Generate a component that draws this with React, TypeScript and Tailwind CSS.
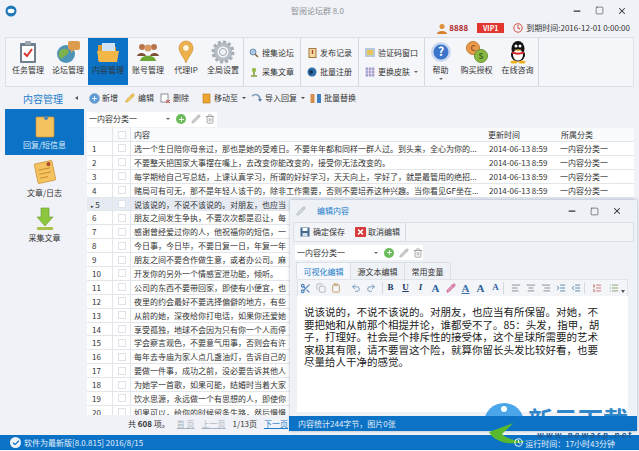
import { AlignCenter, AlignLeft, AlignRight, Check, Clipboard, Clock, Copy, IndentDecrease, IndentIncrease, List, ListOrdered, Minus, Pencil, Plus, Redo2, Scissors, Square, Trash2, Undo2, X } from 'lucide-react'
import type { ReactNode } from 'react'

const rows = [
  '选一个生日陪你母亲过，那也是她的受难日。不要年年都和同样一群人过。到头来，全心为你的...',
  '不要整天把国家大事摆在嘴上，去改变你能改变的，接受你无法改变的。',
  '每学期给自己写总结，上课认真学习，所谓的好好学习，天天向上，学好了，就是最管用的绝招...',
  '赌局可有可无，那不是年轻人该干的，除非工作需要，否则不要培养这种兴趣。当你看见GF坐在...',
  '说该说的，不说不该说的。对朋友，也应当',
  '朋友之间发生争执，不要次次都是忍让，每',
  '感谢曾经爱过你的人，他祝福你的短信，一',
  '今日事，今日毕，不要日复一日，年复一年',
  '朋友之间不要合作做生意，或者办公司。麻',
  '开发你的另外一个情感宣泄功能，倾听。',
  '公司的东西不要带回家，即使有小便宜，也',
  '夜里的约会最好不要选择偏僻的地方，有些',
  '从前的她，深夜给你打电话，如果你还爱她',
  '享受孤独，地球不会因为只有你一个人而停',
  '学会察言观色，不要意气用事，否则会有许',
  '每年去寺庙为家人点几盏油灯，告诉自己的',
  '要做一件事，成功之前，没必要告诉其他人',
  '为她学一首歌，如果可能，结婚时当着大家',
  '饮水思源，永远做一个有思想的人，即使你',
  '如果可以，给你的时候留条生路，然后慢慢',
]

function RibbonButton({ label, active, children, w = 'w-10' }: { label: string; active?: boolean; w?: string; children: ReactNode }) {
  return (
    <div className={`${w} h-[47px] flex flex-col items-center pt-[2px] shrink-0 ${active ? 'bg-[#0b72c6]' : ''}`}>
      <div className="h-[24px] flex items-center justify-center">{children}</div>
      <span className="text-[8px] leading-[12px] text-[#333]">{label}</span>
    </div>
  )
}

function SmallButton({ label, children, caret }: { label: string; caret?: boolean; children: ReactNode }) {
  return (
    <div className="flex items-center gap-[3px] h-[12px] whitespace-nowrap">
      <div className="w-[10px] h-[10px] flex items-center justify-center">{children}</div>
      <span className="text-[8px] leading-[12px] text-[#333]">{label}</span>
      {caret && <span className="ml-[1px] border-x-[2px] border-t-[2px] border-x-transparent border-t-[#666]" />}
    </div>
  )
}

function ToolItem({ label, caret, className = '', children }: { label: string; caret?: boolean; className?: string; children: ReactNode }) {
  return (
    <div className={`flex items-center gap-[2px] whitespace-nowrap ${className}`}>
      <div className="w-[12px] h-[12px] flex items-center justify-center">{children}</div>
      <span className="text-[8px] text-[#333]">{label}</span>
      {caret && <span className="ml-[2px] border-x-[2px] border-t-[2px] border-x-transparent border-t-[#444]" />}
    </div>
  )
}

function CategorySelect({ width }: { width: string }) {
  return (
    <div className="flex items-center h-[15px] bg-white">
      <div className={`${width} flex items-center justify-between pl-[2px] pr-[2px] text-[8px] leading-[12px] text-[#333]`}>
        <span>一内容分类一</span>
        <span className="border-x-[2px] border-t-[2px] border-x-transparent border-t-[#666]" />
      </div>
      <div className="ml-[4px] w-[10px] h-[10px] rounded-full bg-[#6cbb5a] flex items-center justify-center">
        <Plus size={7} strokeWidth={3} color="#fff" />
      </div>
      <Pencil size={10} color="#bbb" className="ml-[5px]" fill="#ccc" />
      <Trash2 size={10} color="#999" className="ml-[4px]" />
    </div>
  )
}

function Cell({ children }: { children: ReactNode }) {
  return <div className="w-[15px] h-[12px] shrink-0 flex items-center justify-center">{children}</div>
}

function ClipboardIcon() {
  return (
    <svg width="20" height="24" viewBox="0 0 20 24">
      <rect x="2" y="3" width="16" height="20" rx="1" fill="#6f7f8c" />
      <rect x="4" y="6" width="12" height="15" fill="#fff" />
      <rect x="7" y="1" width="6" height="4" rx="1" fill="#9aa6b0" />
      <path d="M6 13l3 3 5-7" stroke="#d8342c" strokeWidth="2" fill="none" />
    </svg>
  )
}

function GlobeIcon() {
  return (
    <svg width="26" height="24" viewBox="0 0 26 24">
      <circle cx="11" cy="14" r="9" fill="#4d93b5" />
      <path d="M4 12c3-4 7-4 9-2s-1 5-3 6-4 3-4 3c-2-2-3-4-2-7z" fill="#7eb04c" />
      <rect x="13" y="1" width="12" height="9" rx="2" fill="#dc9c4e" />
      <path d="M16 10v3l3-3z" fill="#dc9c4e" />
    </svg>
  )
}

function FolderIcon() {
  return (
    <svg width="24" height="22" viewBox="0 0 24 22">
      <path d="M2 4h7l2 2h9v14H2z" fill="#d99c33" />
      <rect x="6" y="2" width="13" height="12" fill="#cfe1f2" />
      <path d="M1 10h22l-2 11H3z" fill="#f3b748" />
    </svg>
  )
}

function PeopleIcon() {
  return (
    <svg width="24" height="20" viewBox="0 0 24 20">
      <circle cx="6" cy="5" r="3" fill="#b7734a" />
      <circle cx="18" cy="5" r="3" fill="#b7734a" />
      <circle cx="12" cy="6" r="3.5" fill="#d89a62" />
      <path d="M1 14c1-4 8-4 9 0z" fill="#7c4f33" />
      <path d="M14 14c1-4 8-4 9 0z" fill="#7c4f33" />
      <path d="M4 19c1-7 15-7 16 0z" fill="#6da834" />
    </svg>
  )
}

function PinIcon() {
  return (
    <svg width="16" height="24" viewBox="0 0 16 24">
      <path d="M8 1a7 7 0 0 1 7 7c0 5-5 9-7 15C6 17 1 13 1 8a7 7 0 0 1 7-7z" fill="#eeb04a" stroke="#c98a2c" strokeWidth="0.6" />
      <circle cx="8" cy="8" r="3.4" fill="#fff6dc" stroke="#c98a2c" strokeWidth="0.6" />
    </svg>
  )
}

function GearIcon() {
  return (
    <svg width="24" height="24" viewBox="0 0 24 24">
      <circle cx="12" cy="12" r="7.5" fill="none" stroke="#b7bdc4" strokeWidth="4" />
      <circle cx="12" cy="12" r="10" fill="none" stroke="#a7adb5" strokeWidth="3" strokeDasharray="3 2.2" />
      <circle cx="12" cy="12" r="3.6" fill="#eef0f4" stroke="#8f98a2" strokeWidth="0.8" />
    </svg>
  )
}

function HelpIcon() {
  return (
    <svg width="22" height="22" viewBox="0 0 22 22">
      <circle cx="11" cy="11" r="10" fill="#c9d8ee" />
      <circle cx="11" cy="11" r="7.5" fill="#3c74cc" />
      <text x="11" y="15" textAnchor="middle" fontSize="12" fontWeight="700" fill="#fff">?</text>
    </svg>
  )
}

function CoinsIcon() {
  return (
    <svg width="24" height="24" viewBox="0 0 24 24">
      <circle cx="8" cy="8" r="6.5" fill="#e59a4c" stroke="#c77a2c" />
      <circle cx="16" cy="16" r="6.5" fill="#8bb845" stroke="#66922a" />
      <text x="8" y="11" textAnchor="middle" fontSize="8" fontWeight="700" fill="#a9561a">C</text>
      <text x="16" y="19" textAnchor="middle" fontSize="8" fontWeight="700" fill="#3f6b17">S</text>
    </svg>
  )
}

function QQIcon() {
  return (
    <svg width="20" height="24" viewBox="0 0 20 24">
      <ellipse cx="10" cy="9" rx="6.5" ry="8" fill="#111" />
      <ellipse cx="10" cy="15" rx="7" ry="6.5" fill="#111" />
      <ellipse cx="10" cy="15" rx="5" ry="5.5" fill="#fff" />
      <circle cx="8" cy="6" r="1.5" fill="#fff" />
      <circle cx="12" cy="6" r="1.5" fill="#fff" />
      <path d="M6 9c2 1 6 1 8 0l-4 2.5z" fill="#efb01e" />
      <path d="M4 11.5c4 1.5 8 1.5 12 0v2c-4 1.5-8 1.5-12 0z" fill="#d8262a" />
      <ellipse cx="6" cy="22" rx="3.5" ry="1.5" fill="#efb01e" />
      <ellipse cx="14" cy="22" rx="3.5" ry="1.5" fill="#efb01e" />
    </svg>
  )
}

function NoteIcon({ tilt }: { tilt?: boolean }) {
  return (
    <svg width="26" height="26" viewBox="0 0 26 26" className={tilt ? '-rotate-12' : ''}>
      <rect x="4" y="3" width="18" height="20" rx="1" fill="#f4c25f" stroke="#c88f2e" strokeWidth="0.7" />
      {tilt && <path d="M7 10h12M7 14h12M7 18h8" stroke="#c88f2e" strokeWidth="1" />}
      <circle cx={tilt ? 18 : 14} cy={tilt ? 6 : 4} r="2" fill={tilt ? '#a8482e' : '#4b86b8'} />
    </svg>
  )
}

function DownloadIcon() {
  return (
    <svg width="18" height="24" viewBox="0 0 18 24">
      <path d="M5 1h8v9h4l-8 9-8-9h4z" fill="#8cc63f" stroke="#64982a" strokeWidth="0.6" />
      <rect x="1" y="20" width="16" height="3" rx="1" fill="#a8c24a" />
    </svg>
  )
}

export default function App() {
  return (
    <div className="relative w-[639px] h-[451px] overflow-hidden flex flex-col bg-[#f0f2f7] font-['Noto_Sans_CJK_SC','Liberation_Sans',sans-serif] text-[#333]">
      {/* title + account */}
      <div className="h-[37px] shrink-0 relative">
        <div className="flex items-center justify-between h-[21px] pl-[5px] pr-[12px]">
          <svg width="12" height="12" viewBox="0 0 12 12">
            <circle cx="6" cy="6" r="5.5" fill="#1f78b8" />
            <ellipse cx="6" cy="6" rx="3.4" ry="2.2" fill="#fff" />
          </svg>
          <span className="text-[8px] text-[#8a8f96] ml-[46px]">智阅论坛群 8.0</span>
          <div className="flex items-center gap-[13px] text-[#333]">
            <Minus size={10} strokeWidth={3} />
            <Square size={9} strokeWidth={1.5} />
            <X size={10} strokeWidth={2.5} />
          </div>
        </div>
        <div className="flex items-center justify-end pr-[9px] h-[14px] text-[8px]">
          <svg width="10" height="11" viewBox="0 0 10 11">
            <circle cx="5" cy="3.5" r="2.5" fill="#e0913a" />
            <path d="M0 11c0-4 10-4 10 0z" fill="#d67e2a" />
          </svg>
          <span className="ml-[2px] font-bold text-[#b01f2a]">8888</span>
          <span className="ml-[9px] w-[27px] h-[10px] bg-[#e2352d] text-white text-[7px] leading-[10px] text-center font-bold">VIP1</span>
          <Clock size={10} color="#d0503f" strokeWidth={2.5} className="ml-[9px]" />
          <span className="ml-[3px] text-[#333]">到期时间:2016-12-01 0:00:00</span>
        </div>
      </div>

      {/* ribbon */}
      <div className="mx-[5px] h-[50px] shrink-0 flex bg-[#f5f6f9] border border-[#dde0e6]">
        <div className="flex pl-[2px] w-[238px] border-r border-[#d4d8df]">
          <RibbonButton label="任务管理"><ClipboardIcon /></RibbonButton>
          <RibbonButton label="论坛管理"><GlobeIcon /></RibbonButton>
          <RibbonButton label="内容管理" active><FolderIcon /></RibbonButton>
          <RibbonButton label="账号管理"><PeopleIcon /></RibbonButton>
          <RibbonButton label="代理IP" w="w-9"><PinIcon /></RibbonButton>
          <RibbonButton label="全局设置" w="w-[38px]"><GearIcon /></RibbonButton>
        </div>
        <div className="w-[57px] border-r border-[#d4d8df] flex flex-col justify-center gap-[7px] pl-[5px]">
          <SmallButton label="搜集论坛">
            <svg width="10" height="10" viewBox="0 0 10 10"><circle cx="4" cy="4" r="3" fill="#a9c8e4" stroke="#6f8fae" /><path d="M6 6l3 3" stroke="#8a6b3f" strokeWidth="1.6" /></svg>
          </SmallButton>
          <SmallButton label="采集文章">
            <svg width="10" height="10" viewBox="0 0 10 10"><circle cx="5" cy="3" r="2.2" fill="#9dbb4b" /><path d="M5 5v3M2 9h6" stroke="#7f9c34" strokeWidth="1.5" /></svg>
          </SmallButton>
        </div>
        <div className="w-[58px] border-r border-[#d4d8df] flex flex-col justify-center gap-[7px] pl-[6px]">
          <SmallButton label="发布记录">
            <svg width="9" height="10" viewBox="0 0 9 10"><rect x="1" y="0.5" width="7" height="9" fill="#f2d9a2" stroke="#a5783a" /><path d="M4.5 2v4" stroke="#b0452f" strokeWidth="1.4" /></svg>
          </SmallButton>
          <SmallButton label="批量注册">
            <svg width="10" height="10" viewBox="0 0 10 10"><circle cx="5" cy="5" r="4.5" fill="#2d6ea8" /><path d="M2 4c2-2 4-1 4 1s-3 2-3 3z" fill="#16395a" /></svg>
          </SmallButton>
        </div>
        <div className="w-[66px] border-r border-[#d4d8df] flex flex-col justify-center gap-[7px] pl-[6px]">
          <SmallButton label="验证码窗口">
            <svg width="10" height="9" viewBox="0 0 10 9"><rect width="10" height="9" fill="#b8c9d8" /><rect x="2" y="2" width="6" height="5" fill="#e8c35a" /></svg>
          </SmallButton>
          <SmallButton label="更换皮肤" caret>
            <svg width="10" height="10" viewBox="0 0 10 10">
              <path d="M0 2h10M0 5h10M0 8h10" stroke="#d88fb5" />
              <path d="M2 0v10M5 0v10M8 0v10" stroke="#6e8fd0" />
            </svg>
          </SmallButton>
        </div>
        <div className="w-[114px] border-r border-[#d4d8df] flex">
          <div className="w-[31px] flex flex-col items-center pt-[2px]">
            <div className="h-[24px] flex items-center"><HelpIcon /></div>
            <span className="text-[8px] leading-[12px]">帮助</span>
            <span className="border-x-[2px] border-t-[2px] border-x-transparent border-t-[#666] mt-[2px]" />
          </div>
          <RibbonButton label="购买授权" w="w-[41px]"><CoinsIcon /></RibbonButton>
          <RibbonButton label="在线咨询" w="w-[41px]"><QQIcon /></RibbonButton>
        </div>
      </div>

      {/* sub toolbar */}
      <div className="h-[23px] pb-[1px] shrink-0 flex items-center ml-[23px]">
        <span className="text-[10px] text-[#1c7cc9] w-[52px]">内容管理</span>
        <span className="border-y-[2.5px] border-r-[3px] border-y-transparent border-r-[#555]" />
        <ToolItem label="新增" className="ml-[10px]">
          <div className="w-[11px] h-[11px] rounded-full bg-[#5a9bd8] border border-[#9fb6cc] flex items-center justify-center"><Plus size={7} color="#fff" strokeWidth={3} /></div>
        </ToolItem>
        <ToolItem label="编辑" className="ml-[6px]"><Pencil size={10} color="#d9a93a" fill="#f2cc6b" /></ToolItem>
        <ToolItem label="删除" className="ml-[5px]">
          <svg width="11" height="11" viewBox="0 0 11 11"><rect x="1" y="1" width="7" height="8" fill="#fff" stroke="#8a8f96" /><path d="M6 7l4 3M10 7l-4 3" stroke="#c7443a" /></svg>
        </ToolItem>
        <ToolItem label="移动至" caret className="ml-[11px]">
          <svg width="9" height="11" viewBox="0 0 9 11"><rect x="1" y="1" width="7" height="9" fill="#eda52f" stroke="#b9761a" strokeWidth="0.6" /></svg>
        </ToolItem>
        <ToolItem label="导入回复" caret className="ml-[5px]">
          <svg width="12" height="11" viewBox="0 0 12 11"><path d="M1 3c4-3 8-1 8 4" stroke="#7d9cb8" strokeWidth="1.6" fill="none" /><path d="M7 6l2 3 2-3z" fill="#5a7f9f" /></svg>
        </ToolItem>
        <ToolItem label="批量替换" className="ml-[5px]">
          <svg width="12" height="11" viewBox="0 0 12 11"><rect x="0.5" y="1" width="4" height="9" fill="#d58e4a" /><rect x="7" y="1" width="4" height="9" fill="#3f7fc0" /></svg>
        </ToolItem>
      </div>

      {/* body */}
      <div className="flex flex-1 min-h-0 pl-[5px] pr-[5px]">
        <aside className="w-[79px] shrink-0 flex flex-col -mt-[1px]">
          <div className="h-[46px] bg-[#0b72c6] flex flex-col items-center pt-[5px]">
            <NoteIcon />
            <span className="text-[8px] leading-[11px] text-[#dfeefa] -mt-[1px]">回复/短信息</span>
          </div>
          <div className="h-[44px] flex flex-col items-center pt-[4px]">
            <NoteIcon tilt />
            <span className="text-[8px] leading-[11px] mt-[2px]">文章/日志</span>
          </div>
          <div className="h-[44px] flex flex-col items-center pt-[8px]">
            <DownloadIcon />
            <span className="text-[8px] leading-[11px] mt-[1px]">采集文章</span>
          </div>
        </aside>

        <main className="flex-1 min-w-0 ml-[3px] flex flex-col">
          <div className="h-[18px] shrink-0 flex items-center">
            <div className="bg-white pr-[2px]"><CategorySelect width="w-[85px]" /></div>
          </div>
          <div className="h-[287px] shrink-0 overflow-hidden bg-white">
            <div className="flex h-[14px] bg-[#fafbfc] border-b border-[#e2e5ea] text-[8px] leading-[13px]">
              <div className="w-[25px] shrink-0" />
              <div className="w-[19px] shrink-0 border-x border-[#e2e5ea] flex items-center justify-center">
                <span className="w-[8px] h-[8px] border border-[#dfe2e7] bg-white" />
              </div>
              <div className="w-[355px] shrink-0 pl-[3px]">内容</div>
              <div className="w-[73px] shrink-0 pl-[2px]">更新时间</div>
              <div className="flex-1 pl-[2px]">所属分类</div>
            </div>
            {rows.map((text, i) => (
              <div key={i} className={`flex h-[13.9px] border-b border-[#e2e5ea] text-[8px] leading-[13px] ${i === 4 ? 'bg-[#e6ebf3]' : ''}`}>
                <div className={`w-[25px] shrink-0 ${i === 4 ? 'pl-[4px]' : 'pl-[5px]'}`}>
                  {i === 4 && <span className="text-[5px] align-middle">▸ </span>}
                  {i + 1}
                </div>
                <div className="w-[19px] shrink-0 border-x border-[#e2e5ea] flex items-center justify-center">
                  <span className="w-[8px] h-[8px] border border-[#dfe2e7] bg-white" />
                </div>
                <div className="w-[355px] shrink-0 pl-[3px] whitespace-nowrap">{text}</div>
                {/* the date and category columns of later rows sit behind the editor window */}
                {i < 4 && (
                  <>
                    <div className="w-[73px] shrink-0 pl-[3px] whitespace-nowrap">2014-06-13 8:59</div>
                    <div className="flex-1 pl-[1px] whitespace-nowrap">一内容分类一</div>
                  </>
                )}
              </div>
            ))}
          </div>
          <div className="h-[18px] shrink-0 flex items-center text-[8px] pl-[41px] gap-[7px] whitespace-nowrap">
            <span>共 <b>608</b> 项。</span>
            <span className="text-[#a9b4c2] underline">首 页</span>
            <span className="text-[#a9b4c2] underline">上一页</span>
            <span>1/13页</span>
            <span className="text-[#1c7cc9] underline">下一页</span>
          </div>
        </main>
      </div>

      {/* status bar */}
      <div className="h-[15px] mb-px shrink-0 bg-[#0b72c6] flex items-center justify-between pl-[10px] pr-[24px] text-[8px] text-[#e4f0fa]">
        <div className="flex items-center gap-[3px]">
          <div className="w-[11px] h-[11px] rounded-full bg-[#eef4fa] flex items-center justify-center"><Check size={8} strokeWidth={3.5} color="#0b72c6" /></div>
          <span>软件为最新版[8.0.815] 2016/8/15</span>
        </div>
        <div className="flex items-center gap-[2px] relative z-30">
          <Clock size={9} color="#fff" strokeWidth={2.5} />
          <span className="leading-[10px] mt-[3px]">运行时间：17小时43分钟</span>
        </div>
      </div>

      {/* floating editor window */}
      <div className="absolute left-[290px] top-[200px] w-[347px] h-[231px] bg-[#eef1f6] flex flex-col shadow-[0_0_3px_rgba(90,110,140,0.5)]">
        <div className="h-[22px] shrink-0 flex items-center pl-[3px] pr-[15px]">
          <Pencil size={10} color="#b5bac0" fill="#d4d7dc" className="ml-[3px]" />
          <span className="ml-[11px] text-[8px] text-[#1c7cc9]">编辑内容</span>
          <div className="ml-auto flex items-center gap-[13px] text-[#333]">
            <Minus size={10} strokeWidth={3} />
            <Square size={9} strokeWidth={1.5} />
            <X size={10} strokeWidth={2.5} />
          </div>
        </div>
        <div className="h-[20px] mx-[3px] shrink-0 flex items-center border border-[#dcdfe5] bg-[#f2f4f8] pl-[5px]">
          <ToolItem label="确定保存">
            <svg width="10" height="10" viewBox="0 0 10 10"><rect x="0.5" y="0.5" width="9" height="9" fill="#41698f" /><rect x="2.5" y="1" width="5" height="3" fill="#fff" /><rect x="2.5" y="6" width="5" height="3.5" fill="#d8e2ec" /></svg>
          </ToolItem>
          <ToolItem label="取消编辑" className="ml-[9px]">
            <svg width="11" height="10" viewBox="0 0 11 10"><rect width="11" height="10" rx="1" fill="#d8393a" /><path d="M3 2.5l5 5M8 2.5l-5 5" stroke="#fff" strokeWidth="1.6" /></svg>
          </ToolItem>
          <span className="ml-[5px] h-full border-r border-[#d4d8df]" />
        </div>
        <div className="h-[15px] mt-[3px] ml-[5px] shrink-0 flex">
          <CategorySelect width="w-[85px]" />
        </div>
        <div className="h-[17px] mt-[2px] ml-[6px] shrink-0 flex text-[8px]">
          <div className="w-[55px] bg-[#f7f8fb] border border-b-0 border-[#dcdfe5] text-[#1c7cc9] text-center leading-[17px]">可视化编辑</div>
          <div className="w-[54px] border-r border-t border-[#dcdfe5] text-center leading-[17px]">源文本编辑</div>
          <div className="w-[46px] border-r border-t border-[#dcdfe5] text-center leading-[17px]">常用变量</div>
        </div>
        <div className="h-[17px] ml-[7px] mr-[9px] shrink-0 flex items-center bg-[#f3f5f9] border border-b-0 border-[#e0e3e8] font-['Liberation_Serif',serif] font-bold text-[#2b5f9c]">
          <Cell><Scissors size={11} color="#4b7fb8" strokeWidth={2.4} /></Cell>
          <Cell><Copy size={10} color="#a8b0ba" /></Cell>
          <Cell><Clipboard size={10} color="#b7945a" /></Cell>
          <div className="ml-[5px]"><Cell><Undo2 size={10} color="#7e9cbc" strokeWidth={2.4} /></Cell></div>
          <Cell><Redo2 size={10} color="#7e9cbc" strokeWidth={2.4} /></Cell>
          <span className="ml-[4px] h-[12px] border-r border-[#d4d8df]" />
          <Cell><span className="text-[9px] text-[#1d3a5f]">B</span></Cell>
          <Cell><span className="text-[9px] underline text-[#1d3a5f]">U</span></Cell>
          <Cell><span className="text-[9px] italic text-[#1d3a5f]">I</span></Cell>
          <Cell><span className="text-[11px]">A</span></Cell>
          <Cell><Pencil size={10} color="#c95a8a" fill="#e4a0c0" /></Cell>
          <Cell><span className="text-[11px] underline text-[#3b6ea8]">A</span></Cell>
          <Cell><span className="text-[11px]">A</span></Cell>
          <Cell><span className="text-[9px]">A</span></Cell>
          <span className="h-[12px] border-r border-[#d4d8df]" />
          <div className="ml-[4px]"><Cell><AlignLeft size={10} color="#8a929c" strokeWidth={2.4} /></Cell></div>
          <Cell><AlignCenter size={10} color="#8a929c" strokeWidth={2.4} /></Cell>
          <Cell><AlignRight size={10} color="#8a929c" strokeWidth={2.4} /></Cell>
          <Cell><IndentIncrease size={10} color="#5f8cb0" strokeWidth={2.4} /></Cell>
          <Cell><IndentDecrease size={10} color="#5f8cb0" strokeWidth={2.4} /></Cell>
          <span className="ml-[1px] h-[12px] border-r border-[#d4d8df]" />
          <div className="ml-[4px]"><Cell><ListOrdered size={10} color="#c0625a" /></Cell></div>
          <div className="ml-[2px]"><Cell><List size={10} color="#7a9a5a" /></Cell></div>
          <span className="ml-auto mr-[2px] mt-[6px] border-x-[2px] border-t-[3px] border-x-transparent border-t-[#555]" />
        </div>
        <div className="h-[116px] ml-[7px] mr-[9px] shrink-0 bg-white pl-[7px] pr-[26px] pt-[10px] text-[10.5px] leading-[12.6px] text-[#222]">
          说该说的，不说不该说的。对朋友，也应当有所保留。对她，不要把她和从前那个相提并论，谁都受不了。85：头发，指甲，胡子，打理好。社会是个排斥性的接受体，这个星球所需要的艺术家极其有限，请不要冒这个险，就算你留长头发比较好看，也要尽量给人干净的感觉。
        </div>
        <div className="relative z-10 mt-[4px] h-[15px] -ml-[1px] shrink-0 bg-[#0b72c6] pl-[9px] text-[8px] leading-[15px] text-[#e4f0fa]">内容统计244字节，图片0张</div>
      </div>

      {/* watermark: top half shows above the editor status strip, the rest under it */}
      <div className="absolute z-[5] left-[484px] top-[403px] w-[150px] h-[13px] overflow-hidden pointer-events-none">
        <svg width="44" height="44" viewBox="0 0 44 44" className="absolute left-0 top-0">
          <circle cx="20" cy="20" r="20" fill="#4aa6e8" />
          <circle cx="20" cy="6" r="3" fill="#fff" />
        </svg>
        <span className="absolute left-[44px] top-[1px] text-[25px] leading-[30px] font-bold text-[#2f86c8] whitespace-nowrap">新云下载</span>
      </div>
      <svg width="40" height="22" viewBox="0 0 40 22" className="absolute z-20 left-[487px] top-[423px] pointer-events-none">
        <path d="M26 0L2 9c6 11 22 14 37 9-13 0-20-3-24-7 4-4 8-7 11-11z" fill="#58b82e" />
      </svg>
      <span className="absolute z-20 left-[537px] top-[431px] text-[8px] leading-[7px] font-bold tracking-[2px] text-[#1f5a92] whitespace-nowrap pointer-events-none">www.newasp.net</span>
    </div>
  )
}
